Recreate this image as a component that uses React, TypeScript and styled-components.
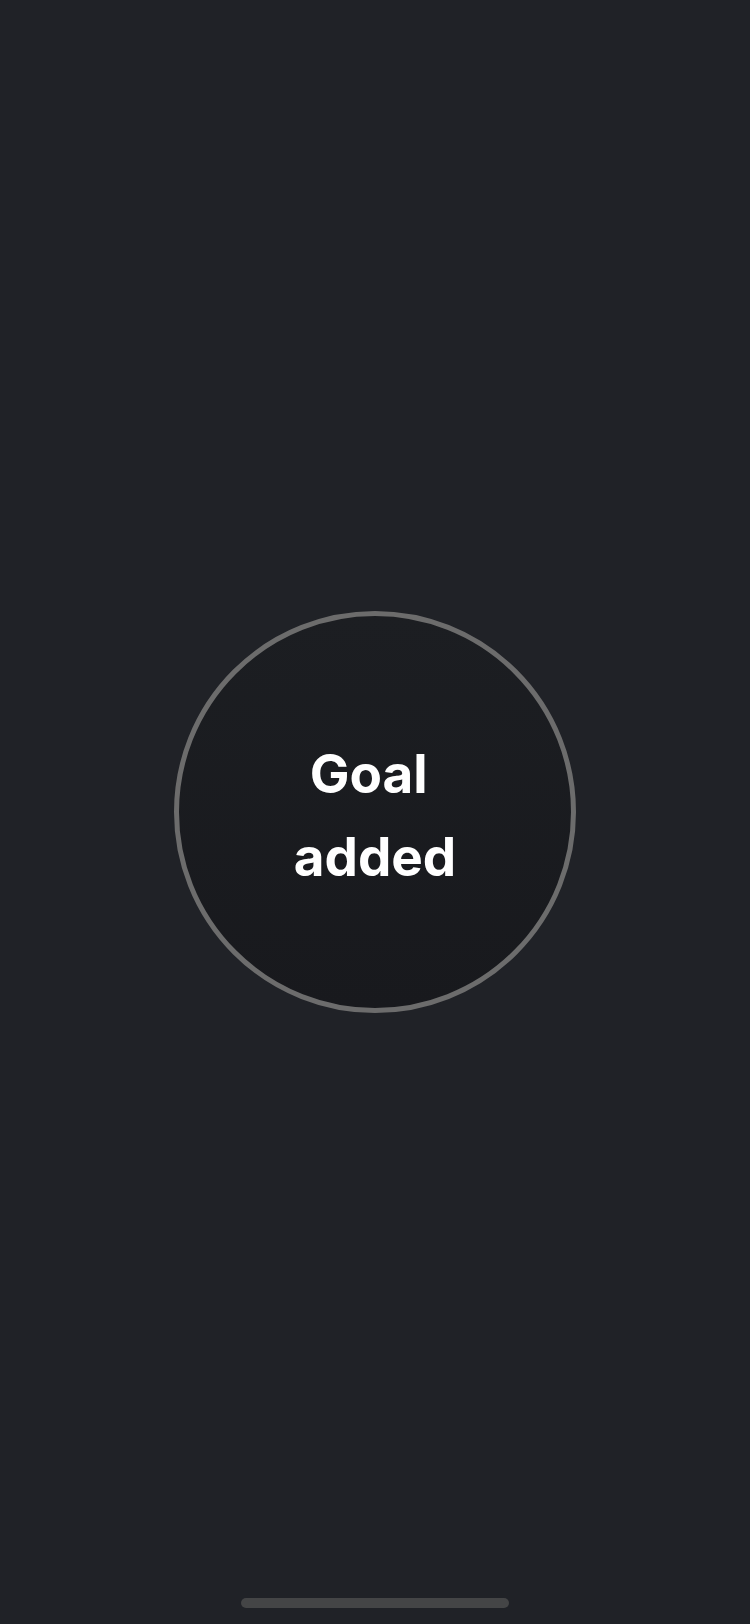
import React from "react";
import styled, { createGlobalStyle } from "styled-components";

const GlobalStyle = createGlobalStyle`
  html, body {
    margin: 0;
    padding: 0;
    background: #202227;
  }
  * { box-sizing: border-box; }
`;

const Screen = styled.div`
  width: 750px;
  height: 1624px;
  background: #202227;
  display: flex;
  flex-direction: column;
  align-items: center;
  font-family: Inter, "Noto Sans", sans-serif;
`;

const Center = styled.div`
  flex: 1;
  display: flex;
  align-items: center;
  justify-content: center;
  padding-top: 26px;
`;

const Badge = styled.div`
  width: 402px;
  height: 402px;
  border-radius: 50%;
  border: 5px solid #6c6c6c;
  background: linear-gradient(180deg, #1c1e22 0%, #18191d 100%);
  display: flex;
  align-items: center;
  justify-content: center;
`;

const Label = styled.div`
  color: #ffffff;
  font-size: 53px;
  font-weight: 700;
  line-height: 83px;
  text-align: center;
  width: 220px;
  padding-top: 8px;
`;

const HomeBar = styled.div`
  width: 268px;
  height: 10px;
  border-radius: 5px;
  background: #444546;
  margin-bottom: 16px;
`;

export default function App() {
  return (
    <>
      <GlobalStyle />
      <Screen>
        <Center>
          <Badge>
            <Label>
              Goal&nbsp;
              <br />
              added
            </Label>
          </Badge>
        </Center>
        <HomeBar />
      </Screen>
    </>
  );
}
